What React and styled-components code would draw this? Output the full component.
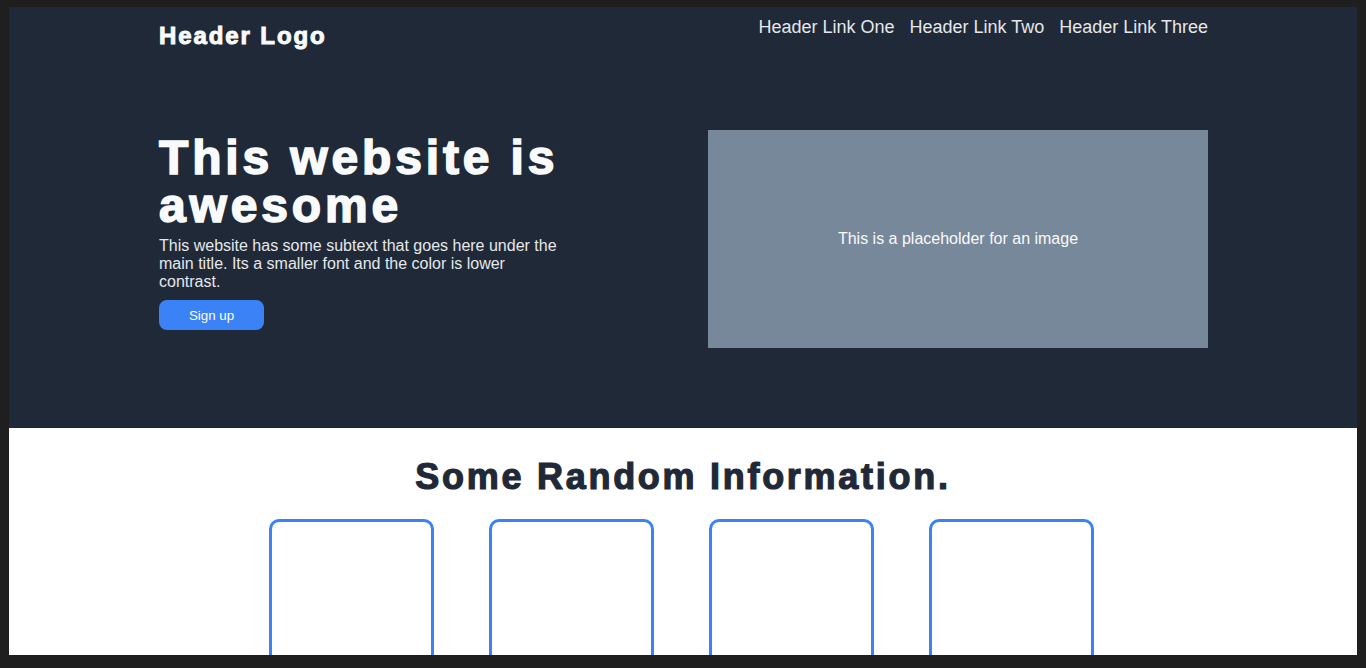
import React from 'react';
import styled, { createGlobalStyle } from 'styled-components';

const GlobalStyle = createGlobalStyle`
	html, body {
		margin: 0;
		padding: 0;
		height: 668px;
		overflow: hidden;
		background: #1f1f1f;
	}
	* {
		box-sizing: border-box;
	}
`;

const cards = [1, 2, 3, 4];
const links = ['Header Link One', 'Header Link Two', 'Header Link Three'];

const App = () => {
	return (
		<>
			<GlobalStyle />
			<Frame>
				<Dark>
					<Header>
						<Logo>Header Logo</Logo>
						<Nav>
							{links.map((link) => (
								<NavLink key={link} href='#'>
									{link}
								</NavLink>
							))}
						</Nav>
					</Header>
					<Hero>
						<HeroText>
							<Title>This website is awesome</Title>
							<Subtext>
								This website has some subtext that goes here under the main
								title. Its a smaller font and the color is lower contrast.
							</Subtext>
							<Button>Sign up</Button>
						</HeroText>
						<Placeholder>This is a placeholder for an image</Placeholder>
					</Hero>
				</Dark>
				<Info>
					<InfoTitle>Some Random Information.</InfoTitle>
					<CardRow>
						{cards.map((card) => (
							<Card key={card} />
						))}
					</CardRow>
				</Info>
			</Frame>
		</>
	);
};

const Frame = styled.div`
	margin: 7px 9px 13px;
	height: 648px;
	overflow: hidden;
	background: #ffffff;
	font-family: 'Liberation Sans', Arial, sans-serif;
`;

const Dark = styled.section`
	background: #1f2937;
	height: 421px;
	padding-top: 10px;
`;

const Header = styled.header`
	width: 1050px;
	margin: 0 auto;
	padding-left: 1px;
	display: flex;
	justify-content: space-between;
	align-items: flex-start;
`;

const Logo = styled.div`
	padding-top: 5px;
	font-size: 24px;
	font-weight: 900;
	letter-spacing: 1.9px;
	-webkit-text-stroke: 1px #f9fafb;
	color: #f9fafb;
`;

const Nav = styled.nav`
	display: flex;
	gap: 15px;
`;

const NavLink = styled.a`
	font-size: 18px;
	color: #e5e7eb;
	text-decoration: none;
`;

const Hero = styled.div`
	width: 1050px;
	margin: 80px auto 0;
	padding-left: 1px;
	display: flex;
	justify-content: space-between;
	align-items: flex-start;
`;

const HeroText = styled.div`
	width: 406px;
	padding-top: 4px;
	display: flex;
	flex-direction: column;
	align-items: flex-start;
`;

const Title = styled.h1`
	margin: 0;
	font-size: 48px;
	line-height: 48px;
	font-weight: 900;
	letter-spacing: 3.85px;
	-webkit-text-stroke: 1.6px #f9fafb;
	color: #f9fafb;
`;

const Subtext = styled.p`
	margin: 7px 0 0;
	font-size: 16px;
	color: #e5e7eb;
`;

const Button = styled.button`
	margin-top: 9px;
	width: 105px;
	height: 30px;
	border: none;
	border-radius: 8px;
	background: #3b82f6;
	color: #ffffff;
	font-family: 'Liberation Sans', Arial, sans-serif;
	font-size: 13.33px;
`;

const Placeholder = styled.div`
	width: 500px;
	height: 218px;
	background: #77889a;
	color: #f9fafb;
	font-size: 16px;
	display: flex;
	align-items: center;
	justify-content: center;
`;

const Info = styled.section`
	padding-top: 28px;
	text-align: center;
`;

const InfoTitle = styled.h2`
	margin: 0;
	font-size: 36px;
	font-weight: 900;
	letter-spacing: 2.72px;
	-webkit-text-stroke: 1.2px #1f2937;
	color: #1f2937;
`;

const CardRow = styled.div`
	margin-top: 21px;
	padding-right: 4px;
	display: flex;
	justify-content: center;
	gap: 55px;
`;

const Card = styled.div`
	width: 165px;
	height: 200px;
	border: 3px solid #3b82f6;
	border-radius: 10px;
`;

export default App;
